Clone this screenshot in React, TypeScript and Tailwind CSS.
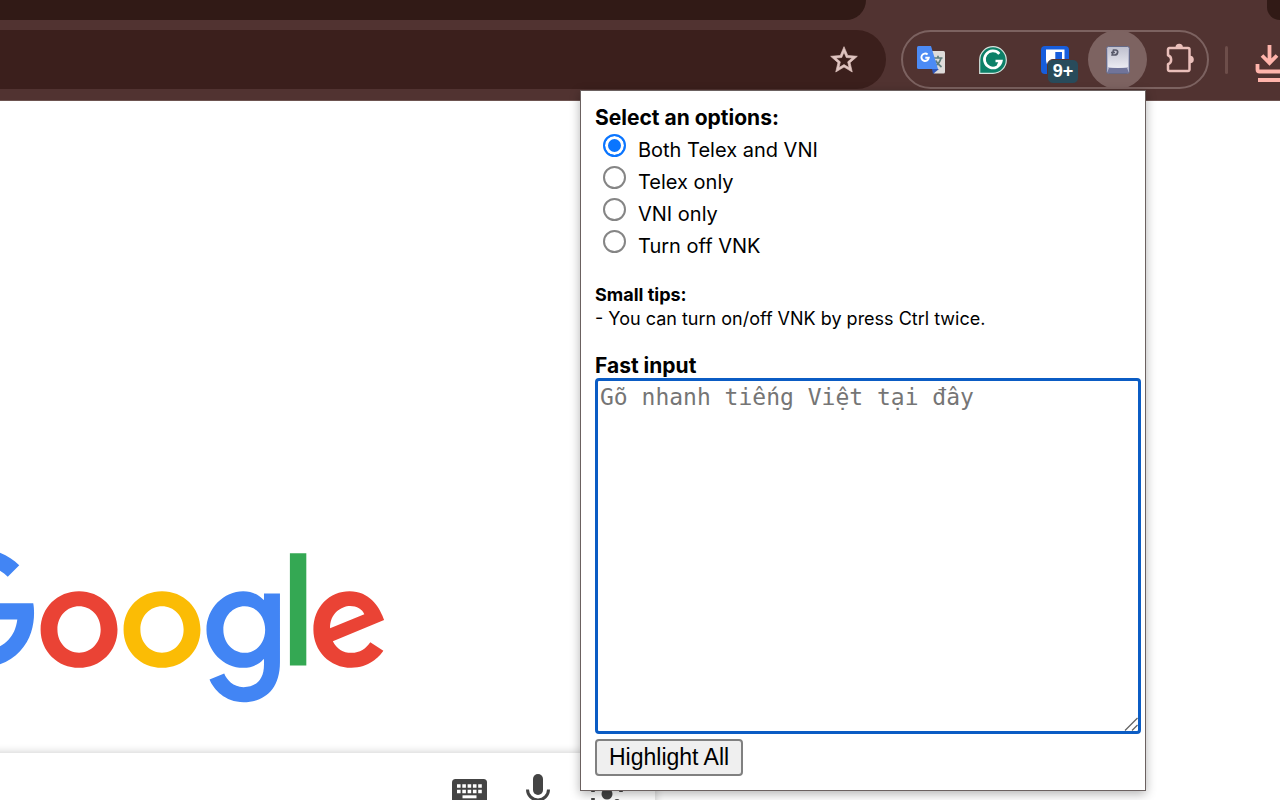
import React from "react";

function GoogleLogo() {
  return (
    <svg viewBox="0 0 272 92" role="img" aria-label="Google" className="-ml-[83px] block h-[159px] w-[471px] shrink-0">
      <path fill="#EA4335" d="M115.75 47.18c0 12.77-9.99 22.18-22.25 22.18s-22.25-9.41-22.25-22.18C71.25 34.32 81.24 25 93.5 25s22.25 9.32 22.25 22.18zm-9.74 0c0-7.98-5.79-13.44-12.51-13.44S80.99 39.2 80.99 47.18c0 7.9 5.79 13.44 12.51 13.44s12.51-5.55 12.51-13.44z" />
      <path fill="#FBBC05" d="M163.75 47.18c0 12.77-9.99 22.18-22.25 22.18s-22.25-9.41-22.25-22.18c0-12.85 9.99-22.18 22.25-22.18s22.25 9.32 22.25 22.18zm-9.74 0c0-7.98-5.79-13.44-12.51-13.44s-12.51 5.46-12.51 13.44c0 7.9 5.79 13.44 12.51 13.44s12.51-5.55 12.51-13.44z" />
      <path fill="#4285F4" d="M209.75 26.34v39.82c0 16.38-9.66 23.07-21.08 23.07-10.75 0-17.22-7.19-19.66-13.07l8.48-3.53c1.51 3.61 5.21 7.87 11.17 7.87 7.31 0 11.84-4.51 11.84-13v-3.19h-.34c-2.18 2.69-6.38 5.04-11.68 5.04-11.09 0-21.25-9.66-21.25-22.09 0-12.52 10.16-22.26 21.25-22.26 5.29 0 9.49 2.35 11.68 4.96h.34v-3.61h9.25zm-8.56 20.92c0-7.81-5.21-13.52-11.84-13.52-6.72 0-12.35 5.71-12.35 13.52 0 7.73 5.63 13.36 12.35 13.36 6.63 0 11.84-5.63 11.84-13.36z" />
      <path fill="#34A853" d="M225 3v65h-9.5V3h9.5z" />
      <path fill="#EA4335" d="M262.02 54.48l7.56 5.04c-2.44 3.61-8.32 9.83-18.48 9.83-12.6 0-22.01-9.74-22.01-22.18 0-13.19 9.49-22.18 20.92-22.18 11.51 0 17.14 9.16 18.98 14.11l1.01 2.52-29.65 12.28c2.27 4.45 5.8 6.72 10.75 6.72 4.96 0 8.4-2.44 10.92-6.14zm-23.27-7.98l19.82-8.23c-1.09-2.77-4.37-4.7-8.23-4.7-4.95 0-11.84 4.37-11.59 12.93z" />
      <path fill="#4285F4" d="M35.29 41.41V32H67c.31 1.64.47 3.58.47 5.68 0 7.06-1.93 15.79-8.15 22.01-6.05 6.3-13.78 9.66-24.02 9.66C16.32 69.35.36 53.89.36 34.91.36 15.93 16.32.47 35.3.47c10.5 0 17.98 4.12 23.6 9.49l-6.64 6.64c-4.03-3.78-9.49-6.72-16.97-6.72-13.86 0-24.7 11.17-24.7 25.03 0 13.86 10.84 25.03 24.7 25.03 8.99 0 14.11-3.61 17.39-6.89 2.66-2.66 4.41-6.46 5.1-11.65l-22.49.01z" />
    </svg>
  );
}

function StarIcon() {
  return (
    <svg viewBox="0 0 24 24" className="block size-8" fill="#e0c4c0" stroke="#e0c4c0" strokeWidth=".5">
      <path d="M22 9.24l-7.19-.62L12 2 9.19 8.63 2 9.24l5.46 4.73L5.82 21 12 17.27 18.18 21l-1.63-7.03L22 9.24zM12 15.4l-3.76 2.27 1-4.28-3.32-2.88 4.38-.38L12 6.1l1.71 4.04 4.38.38-3.32 2.88 1 4.28L12 15.4z" />
    </svg>
  );
}

function TranslateIcon() {
  return (
    <svg viewBox="0 0 28 28" className="block size-7">
      <path d="M13 5h13.500q1.500 0 1.500 1.500V26q0 1.500-1.500 1.500H17z" fill="#dedcda" />
      <path d="M15 23h7l-6 5z" fill="#2f55b8" />
      <path d="M16.500 12h9M21 9.800V12M24 12c-1 4-4 7-6 8M18.500 14.500c1.500 3 4 5 6 6.500" fill="none" stroke="#5f7d7c" strokeWidth="1.700" />
      <path d="M1.500 0H14l7 23H1.500Q0 23 0 21.500v-20Q0 0 1.500 0z" fill="#4c8bf5" />
      <path d="M10.600 8.500A3.700 3.700 0 1 0 11.800 11.700H8.300" fill="none" stroke="#fff" strokeWidth="1.900" />
    </svg>
  );
}

function GrammarlyIcon() {
  return (
    <svg viewBox="0 0 28 28" className="block size-7">
      <path d="M.7 27.300V14A13.300 13.300 0 1 1 14 27.300z" fill="#0c8068" stroke="#d6e3de" strokeWidth="1.200" />
      <path d="M20.300 7.800A8.500 8.500 0 1 0 22.300 15H16.500" fill="none" stroke="#fff" strokeWidth="2.700" />
      <path d="M21 15l-2 4.500" stroke="#fff" strokeWidth="2.400" />
    </svg>
  );
}

function VaultIcon() {
  return (
    <svg viewBox="0 0 28 28" className="block size-7">
      <rect width="28" height="28" rx="4" fill="#175ddc" />
      <path d="M5 3.500h18.500V14c0 5-4 8-9.300 11C9 22 5 19 5 14z" fill="#fff" />
      <path d="M14.300 6H21v8c0 3.500-3 6-6.700 8z" fill="#175ddc" />
    </svg>
  );
}

function KeycapIcon() {
  return (
    <svg viewBox="0 0 24 28" className="block h-7 w-6">
      <defs>
        <linearGradient id="keyTop" x1="0" y1="0" x2="0" y2="1">
          <stop offset="0" stopColor="#bfc0ce" />
          <stop offset="1" stopColor="#ebebf2" />
        </linearGradient>
      </defs>
      <rect x=".5" y=".5" width="23" height="27" rx="2" fill="#b4b5cb" stroke="#656986" />
      <path d="M1 27l2-5h18l2 5z" fill="#70749a" />
      <path d="M2 1h20v20q-10 2-20 0z" fill="url(#keyTop)" />
      <path d="M7.500 4h2c3.500 0 2.500 5-1 5H6.200zM5 6.500h4" fill="none" stroke="#595b6b" strokeWidth="1.700" />
    </svg>
  );
}

function PuzzleIcon() {
  return (
    <svg viewBox="0 0 30 30" className="block size-[30px]" fill="none">
      <path d="M4.500 5H23a1.500 1.500 0 0 1 1.500 1.500v20A1.500 1.500 0 0 1 23 28H4.500A1.500 1.500 0 0 1 3 26.500v-5.300c4.200-1.500 4.200-7.400 0-8.900V6.500A1.500 1.500 0 0 1 4.500 5z" stroke="#eabfba" strokeWidth="2.500" strokeLinejoin="round" />
      <path d="M10.500 4.500a3.700 3.700 0 0 1 7.400 0zM25 12.700a3.800 3.800 0 0 1 0 7.600z" fill="#eabfba" />
    </svg>
  );
}

function DownloadIcon() {
  return (
    <svg viewBox="0 0 30 38" className="block h-[38px] w-[30px] shrink-0" fill="none" stroke="#ffb4ab" strokeWidth="3.800">
      <path d="M14.500 0v18M7 10.500l7.500 7.500 7.500-7.500M2.500 19v5.500q0 2 2 2H30M3 35h27" />
    </svg>
  );
}

function KeyboardIcon() {
  return (
    <svg viewBox="0 0 36 26" className="block h-[26px] w-9">
      <rect width="35" height="26" rx="3.500" fill="#444" />
      <path d="M5 7h26M5 12.500h26" stroke="#fff" strokeWidth="3.600" strokeDasharray="3.600 1.700" />
      <path d="M10.500 17.800h14" stroke="#fff" strokeWidth="3" />
    </svg>
  );
}

function MicIcon() {
  return (
    <svg viewBox="0 0 24 36" className="block h-9 w-6" fill="none">
      <rect x="7" y="0" width="10" height="21" rx="5" fill="#444" />
      <path d="M1.500 15.500a10.500 10.500 0 0 0 21 0M12 26v7" stroke="#444" strokeWidth="3" />
    </svg>
  );
}

function LensIcon() {
  return (
    <svg viewBox="0 0 34 34" className="block size-[34px]" fill="none">
      <path d="M3 14V9q0-4 4-4h5M21 5h5q5 0 5 5v4M3 20v6" stroke="#444" strokeWidth="3.600" />
      <circle cx="17" cy="16" r="5.500" fill="#444" />
      <circle cx="27" cy="24" r="3" fill="#444" />
    </svg>
  );
}

function BrowserHeader() {
  return (
    <header className="flex flex-col border-b border-[#6d5350] bg-[#513331] pb-[11px]">
      <div className="flex h-[30px] items-start justify-between overflow-hidden">
        <div className="mr-[401px] h-5 grow rounded-br-[20px] bg-[#311a16]" />
        <div className="h-5 w-[13px] shrink-0 rounded-bl-[20px] bg-[#311a16]" />
      </div>
      <div className="flex h-[59px] items-center overflow-hidden">
        <div className="flex h-full grow items-center justify-end rounded-r-full bg-[#3b1f1c] pr-[26px]">
          <button aria-label="Bookmark this tab">
            <StarIcon />
          </button>
        </div>
        <div className="ml-[15px] flex h-full w-[308px] shrink-0 items-center rounded-full border-2 border-[#7c6260] pl-[14px]">
          <button aria-label="Translate"><TranslateIcon /></button>
          <button aria-label="Grammarly" className="ml-[34px]"><GrammarlyIcon /></button>
          <button aria-label="Password vault" className="relative ml-[34px]">
            <VaultIcon />
            <span className="absolute top-[13px] left-[6px] flex h-[25px] w-8 items-center justify-center rounded-md border border-[#513331] bg-[#284b5b] font-['Liberation_Sans',sans-serif] text-[18px] leading-6 font-bold text-white">9+</span>
          </button>
          <button aria-label="VNK" className="ml-[19px] flex size-[59px] shrink-0 items-center justify-center rounded-full bg-[#7d6361]"><KeycapIcon /></button>
          <button aria-label="Extensions" className="ml-[18px] pb-1"><PuzzleIcon /></button>
        </div>
        <div className="ml-4 h-7 w-[3px] shrink-0 rounded-full bg-[#6d4e4a]" />
        <button aria-label="Downloads" className="ml-[27px] w-[25px] shrink-0 overflow-hidden pt-2"><DownloadIcon /></button>
      </div>
    </header>
  );
}

const modes = ["Both Telex and VNI", "Telex only", "VNI only", "Turn off VNK"];

function VnkPopup() {
  return (
    <section className="absolute top-[90px] right-[134px] flex w-[566px] flex-col border border-[#6b6160] bg-white pt-[11px] pr-1 pb-[14px] pl-[14px] text-[20px] text-black shadow-[0_3px_10px_rgba(0,0,0,0.3)]">
      <fieldset className="flex flex-col">
        <legend className="text-[21px] leading-8 font-bold">Select an options:</legend>
        {modes.map((mode, index) => (
          <label key={mode} className="flex h-8 items-start gap-3 pl-2 leading-8">
            <input
              type="radio"
              name="mode"
              defaultChecked={index === 0}
              className="size-[23px] shrink-0 appearance-none rounded-full border-2 border-[#858585] bg-white checked:border-[#0a75ff] checked:bg-[#0a75ff] checked:shadow-[inset_0_0_0_3px_white]"
            />
            {mode}
          </label>
        ))}
      </fieldset>
      <div className="mt-[21px] text-[18px] leading-6">
        <p className="font-bold">Small tips:</p>
        <p>- You can turn on/off VNK by press Ctrl twice.</p>
      </div>
      <label htmlFor="fast-input" className="mt-[23px] text-[21px] leading-6 font-bold">Fast input</label>
      <div className="relative">
        <textarea
          id="fast-input"
          placeholder="Gõ nhanh tiếng Việt tại đây"
          className="block h-[356px] w-full resize-none rounded-[4px] border-[3px] border-[#0b5cc4] px-[2px] font-['DejaVu_Sans_Mono',monospace] text-[23px] leading-8 outline-none placeholder:text-[#757575]"
        />
        <svg viewBox="0 0 14 14" className="pointer-events-none absolute right-[3px] bottom-[3px] size-[14px]" stroke="#666" strokeWidth="1.300">
          <path d="M1 13.500L13.500 1M8 13.500L13.500 8" />
        </svg>
      </div>
      <button className="mt-[5px] h-[37px] self-start rounded-[4px] border-2 border-[#808080] bg-[#efefef] px-3 pb-[2px] font-['Liberation_Sans',sans-serif] text-[23px] leading-7">Highlight All</button>
    </section>
  );
}

export default function App() {
  return (
    <div className="relative flex h-screen flex-col overflow-hidden bg-white font-[Inter,sans-serif]">
      <BrowserHeader />
      <main className="flex grow flex-col pt-[447px]">
        <GoogleLogo />
        <div className="-ml-10 mt-[46px] flex h-24 w-[695px] shrink-0 items-start justify-end rounded-[24px] bg-white pt-[21px] pr-[31px] shadow-[0_0_10px_rgba(0,0,0,0.22)]">
          <button aria-label="On-screen keyboard" className="mt-[5px] mr-[38px]"><KeyboardIcon /></button>
          <button aria-label="Search by voice" className="mr-[40px]"><MicIcon /></button>
          <button aria-label="Search by image" className="pt-1"><LensIcon /></button>
        </div>
      </main>
      <VnkPopup />
    </div>
  );
}
